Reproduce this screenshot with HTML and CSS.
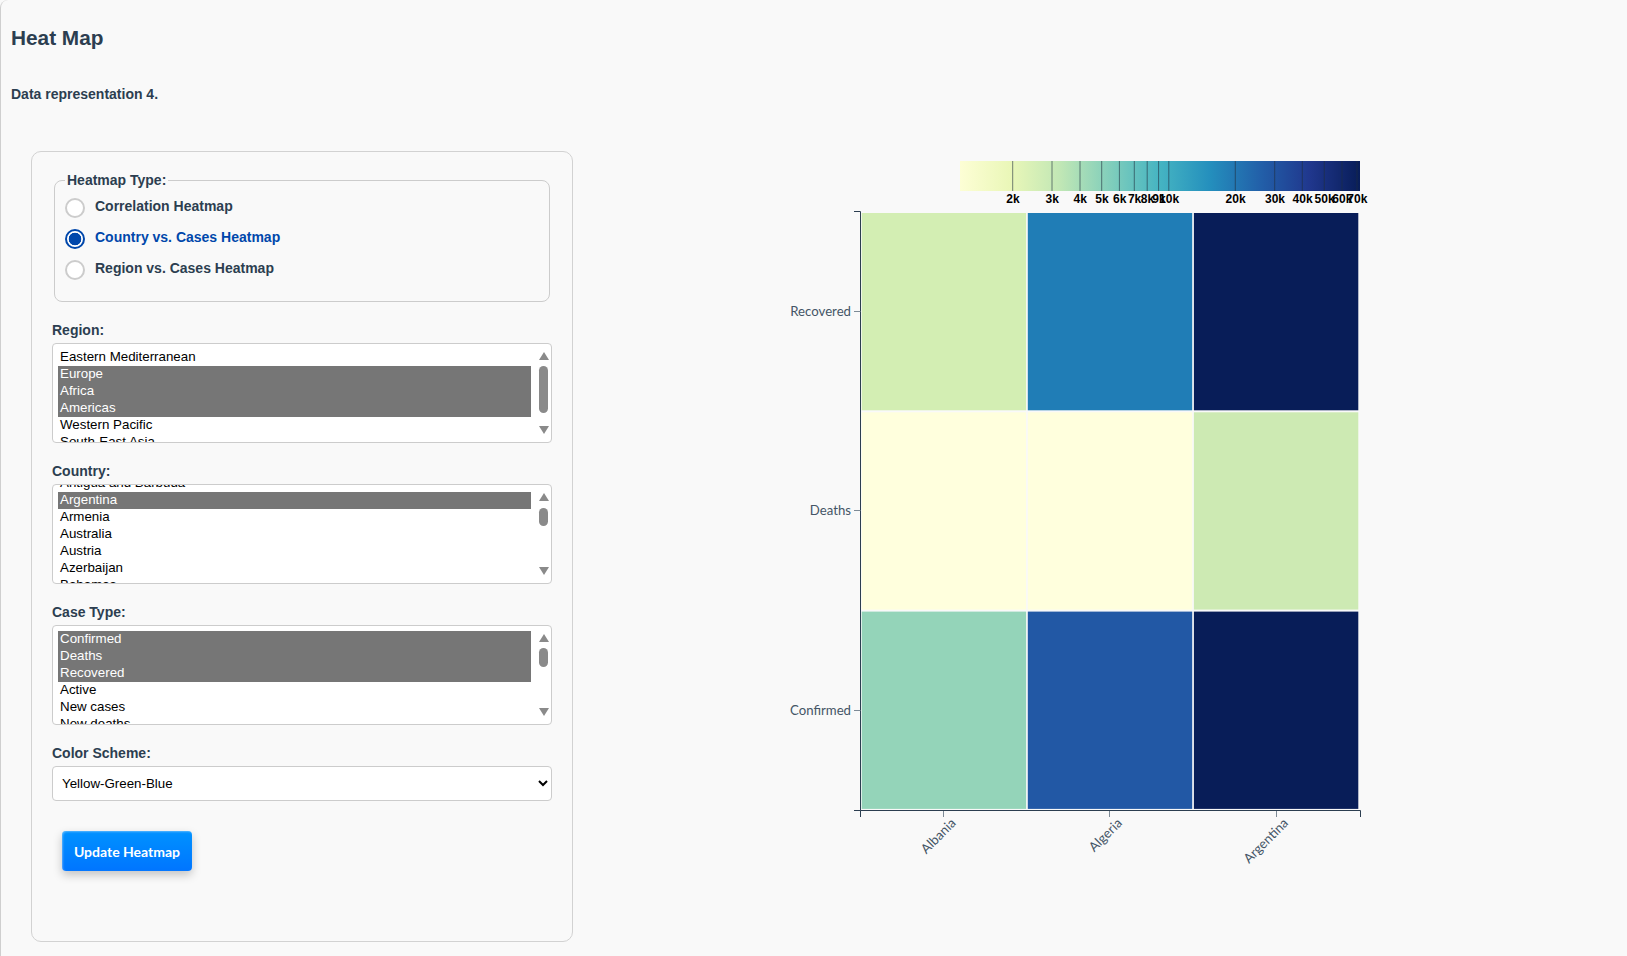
FILE: index.html
```html
<!DOCTYPE html>
<html lang="en">
<head>
<meta charset="utf-8">
<title>Heat Map</title>
<link rel="stylesheet" href="styles.css">
</head>
<body>
<div class="page">
  <h2 class="title">Heat Map</h2>
  <p class="subtitle">Data representation 4.</p>
  <div class="main">
    <form class="panel">
      <fieldset class="types">
        <legend>Heatmap Type:</legend>
        <div class="radio"><span class="dot"></span><span>Correlation Heatmap</span></div>
        <div class="radio active"><span class="dot"></span><span>Country vs. Cases Heatmap</span></div>
        <div class="radio"><span class="dot"></span><span>Region vs. Cases Heatmap</span></div>
      </fieldset>

      <div class="label">Region:</div>
      <div class="list" role="listbox">
        <div class="viewport">
          <div class="opt">Eastern Mediterranean</div>
          <div class="opt sel">Europe</div>
          <div class="opt sel">Africa</div>
          <div class="opt sel">Americas</div>
          <div class="opt">Western Pacific</div>
          <div class="opt">South-East Asia</div>
        </div>
        <div class="scrollbar">
          <svg class="arrow" viewBox="0 0 10 8"><path d="M5 0L10 8H0Z"/></svg>
          <div class="thumb thumb-region"></div>
          <svg class="arrow down" viewBox="0 0 10 8"><path d="M0 0H10L5 8Z"/></svg>
        </div>
      </div>

      <div class="label">Country:</div>
      <div class="list" role="listbox">
        <div class="viewport">
          <div class="scrolled">
            <div class="opt">Antigua and Barbuda</div>
            <div class="opt sel">Argentina</div>
            <div class="opt">Armenia</div>
            <div class="opt">Australia</div>
            <div class="opt">Austria</div>
            <div class="opt">Azerbaijan</div>
            <div class="opt">Bahamas</div>
          </div>
        </div>
        <div class="scrollbar">
          <svg class="arrow" viewBox="0 0 10 8"><path d="M5 0L10 8H0Z"/></svg>
          <div class="thumb thumb-country"></div>
          <svg class="arrow down" viewBox="0 0 10 8"><path d="M0 0H10L5 8Z"/></svg>
        </div>
      </div>

      <div class="label">Case Type:</div>
      <div class="list" role="listbox">
        <div class="viewport">
          <div class="opt sel">Confirmed</div>
          <div class="opt sel">Deaths</div>
          <div class="opt sel">Recovered</div>
          <div class="opt">Active</div>
          <div class="opt">New cases</div>
          <div class="opt">New deaths</div>
        </div>
        <div class="scrollbar">
          <svg class="arrow" viewBox="0 0 10 8"><path d="M5 0L10 8H0Z"/></svg>
          <div class="thumb thumb-case"></div>
          <svg class="arrow down" viewBox="0 0 10 8"><path d="M0 0H10L5 8Z"/></svg>
        </div>
      </div>

      <div class="label">Color Scheme:</div>
      <select class="scheme">
        <option>Yellow-Green-Blue</option>
      </select>

      <button class="update" type="button">Update Heatmap</button>
    </form>

    <svg class="chart" width="600" height="730" viewBox="780 151 600 730">
      <defs>
        <linearGradient id="ylgnbu">
          <stop offset="0" stop-color="#fdfed5"/>
          <stop offset="0.125" stop-color="#eaf7b8"/>
          <stop offset="0.25" stop-color="#c1e7b5"/>
          <stop offset="0.375" stop-color="#81cebb"/>
          <stop offset="0.5" stop-color="#45b4c2"/>
          <stop offset="0.625" stop-color="#248fbd"/>
          <stop offset="0.75" stop-color="#2260a9"/>
          <stop offset="0.875" stop-color="#20378d"/>
          <stop offset="1" stop-color="#081d58"/>
        </linearGradient>
      </defs>

      <rect x="960" y="161" width="400" height="30" fill="url(#ylgnbu)"/>
      <g class="legend-ticks">
        <path d="M1012.7 161V191M1052 161V191M1080 161V191M1101.7 161V191M1119.4 161V191M1134.3 161V191M1147.2 161V191M1158.6 161V191M1168.8 161V191M1235.3 161V191M1274.7 161V191M1302.3 161V191M1324.3 161V191M1342 161V191M1357 161V191"/>
      </g>
      <g class="legend-labels">
        <text x="1013" y="203">2k</text>
        <text x="1052.3" y="203">3k</text>
        <text x="1080.3" y="203">4k</text>
        <text x="1102" y="203">5k</text>
        <text x="1119.7" y="203">6k</text>
        <text x="1134.6" y="203">7k</text>
        <text x="1147.5" y="203">8k</text>
        <text x="1158.9" y="203">9k</text>
        <text x="1169.1" y="203">10k</text>
        <text x="1235.6" y="203">20k</text>
        <text x="1275" y="203">30k</text>
        <text x="1302.6" y="203">40k</text>
        <text x="1324.6" y="203">50k</text>
        <text x="1342.3" y="203">60k</text>
        <text x="1357.3" y="203">70k</text>
      </g>

      <rect x="861.7" y="213" width="164.4" height="197.3" fill="#d3eeb3"/>
      <rect x="1027.8" y="213" width="164.4" height="197.3" fill="#207db6"/>
      <rect x="1193.9" y="213" width="164.4" height="197.3" fill="#081d58"/>
      <rect x="861.7" y="412.3" width="164.4" height="197.3" fill="#ffffdd"/>
      <rect x="1027.8" y="412.3" width="164.4" height="197.3" fill="#ffffdd"/>
      <rect x="1193.9" y="412.3" width="164.4" height="197.3" fill="#cdeab3"/>
      <rect x="861.7" y="611.6" width="164.4" height="197.3" fill="#94d4b9"/>
      <rect x="1027.8" y="611.6" width="164.4" height="197.3" fill="#2258a5"/>
      <rect x="1193.9" y="611.6" width="164.4" height="197.3" fill="#081d58"/>

      <g class="axis">
        <path class="domain" d="M854 211.5H860.5V810.5H854"/>
        <path class="domain" d="M860.5 817V810.5H1360.5V817"/>
        <path class="tick" d="M854 311.5H860.5M854 510.5H860.5M854 710.5H860.5M943.5 811V817M1109.5 811V817M1276.5 811V817"/>
        <text class="ylabel" x="851" y="315.5">Recovered</text>
        <text class="ylabel" x="851" y="514.5">Deaths</text>
        <text class="ylabel" x="851" y="714.5">Confirmed</text>
        <g transform="translate(943.7 811)"><text class="xlabel" y="9" dy=".71em" transform="rotate(-45)">Albania</text></g>
        <g transform="translate(1109.8 811)"><text class="xlabel" y="9" dy=".71em" transform="rotate(-45)">Algeria</text></g>
        <g transform="translate(1276 811)"><text class="xlabel" y="9" dy=".71em" transform="rotate(-45)">Argentina</text></g>
      </g>
    </svg>
  </div>
</div>
</body>
</html>
```
FILE: styles.css
```css
* { box-sizing: border-box; }

html, body {
  margin: 0;
  height: 100%;
  overflow: hidden;
  background: #f9f9f9;
}

body {
  font-family: "Liberation Sans", Arial, sans-serif;
  color: #2c3e50;
}

.page {
  height: 956px;
  border-left: 1px solid #cfcfcf;
  border-top-left-radius: 8px;
  padding: 26px 0 0 10px;
}

.title {
  margin: 0;
  font-size: 20.8px;
  line-height: 24px;
  font-weight: 700;
}

.subtitle {
  margin: 36px 0 0;
  font-size: 14px;
  line-height: 16px;
  font-weight: 700;
}

.main {
  display: flex;
  align-items: flex-start;
  margin: 49px 0 0 20px;
}

.panel {
  width: 542px;
  height: 791px;
  flex: none;
  padding: 20px;
  border: 1px solid #d2d2d2;
  border-radius: 10px;
  background: #f9f9f9;
}

.types {
  margin: 0 2px;
  padding: 12px 10px 21px;
  border: 1px solid #cccccc;
  border-radius: 8px;
  display: flex;
  flex-direction: column;
  gap: 11px;
}

.types legend {
  margin-bottom: -2px;
  padding: 0 2px;
  font-size: 14px;
  line-height: 16px;
  font-weight: 700;
}

.radio {
  display: flex;
  align-items: flex-start;
  gap: 10px;
  height: 20px;
  font-size: 14px;
  line-height: 16px;
  font-weight: 700;
}

.dot {
  width: 20px;
  height: 20px;
  flex: none;
  border: 2px solid #cccccc;
  border-radius: 50%;
  background: #ffffff;
}

.radio.active { color: #0047ab; }

.radio.active .dot {
  border-color: #0047ab;
  background: radial-gradient(circle, #0047ab 0 6px, #ffffff 6.6px);
}

.label {
  margin: 20px 0 5px;
  font-size: 14px;
  line-height: 16px;
  font-weight: 700;
}

.list {
  display: flex;
  width: 500px;
  height: 100px;
  border: 1px solid #cccccc;
  border-radius: 4px;
  background: #ffffff;
  overflow: hidden;
}

.viewport {
  flex: 1;
  min-width: 0;
  padding: 5px 5px 0;
  overflow: hidden;
  font-size: 13.333px;
  line-height: 15px;
  color: #000000;
}

.scrolled { margin-top: -15px; }

.opt {
  height: 17px;
  padding: 0 2px;
  white-space: nowrap;
}

.opt.sel {
  background: #767676;
  color: #ffffff;
}

.scrollbar {
  width: 15px;
  flex: none;
  display: flex;
  flex-direction: column;
  align-items: center;
  padding: 8px 0;
}

.arrow {
  width: 10px;
  height: 8px;
  flex: none;
  display: block;
  fill: #8a8a8a;
}

.arrow.down { margin-top: auto; }

.thumb {
  width: 9px;
  flex: none;
  border-radius: 5px;
  background: #8a8a8a;
}

.thumb-region { height: 47px; margin-top: 6px; }
.thumb-country { height: 18px; margin-top: 7px; }
.thumb-case { height: 19px; margin-top: 6px; }

.scheme {
  display: block;
  width: 500px;
  height: 35px;
  padding: 0 5px;
  border: 1px solid #cccccc;
  border-radius: 4px;
  background-color: #ffffff;
  color: #000000;
  font-family: inherit;
  font-size: 13.333px;
}

.update {
  display: block;
  width: 130px;
  height: 40px;
  margin: 30px 0 0 10px;
  padding: 0;
  border: 0;
  border-radius: 4px;
  background: linear-gradient(#0092ff, #0075ff);
  box-shadow: inset 1px 1px 2px rgba(255, 255, 255, 0.35), 0 4px 10px rgba(0, 0, 0, 0.22);
  color: #ffffff;
  font-family: Lato, sans-serif;
  font-size: 14px;
  font-weight: 700;
}

.chart {
  display: block;
  flex: none;
  margin-left: 207px;
}

.legend-ticks path {
  fill: none;
  stroke: #1f2f40;
  stroke-opacity: 0.6;
  stroke-width: 1;
}

.legend-labels text {
  font-family: "Liberation Sans", Arial, sans-serif;
  font-size: 12px;
  font-weight: 700;
  fill: #000000;
  text-anchor: middle;
}

.axis text {
  font-family: Lato, sans-serif;
  font-size: 13.2px;
  fill: #445566;
}

.ylabel, .xlabel { text-anchor: end; }

.domain {
  fill: none;
  stroke: #2c3e50;
  stroke-width: 1;
}

.tick {
  fill: none;
  stroke: #7d8a96;
  stroke-width: 1;
}
```
